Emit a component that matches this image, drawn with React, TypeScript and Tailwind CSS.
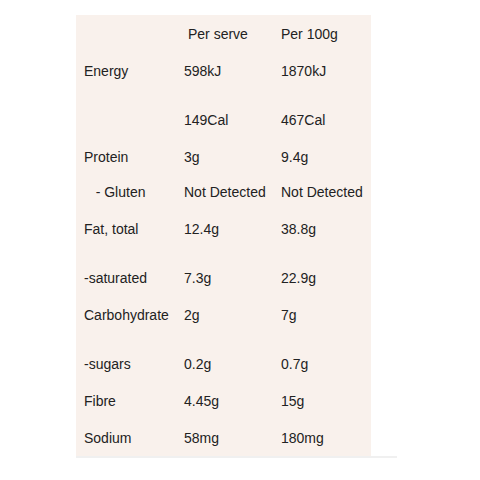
import React from "react";

type Row = { label: string; serve: string; per100: string; gap: string };

const rows: Row[] = [
  { label: "Energy", serve: "598kJ", per100: "1870kJ", gap: "pt-[21px]" },
  { label: "", serve: "149Cal", per100: "467Cal", gap: "pt-[33px]" },
  { label: "Protein", serve: "3g", per100: "9.4g", gap: "pt-[21px]" },
  { label: "\u00a0\u00a0\u00a0- Gluten", serve: "Not Detected", per100: "Not Detected", gap: "pt-[19px]" },
  { label: "Fat, total", serve: "12.4g", per100: "38.8g", gap: "pt-[21px]" },
  { label: "-saturated", serve: "7.3g", per100: "22.9g", gap: "pt-[33px]" },
  { label: "Carbohydrate", serve: "2g", per100: "7g", gap: "pt-[21px]" },
  { label: "-sugars", serve: "0.2g", per100: "0.7g", gap: "pt-[33px]" },
  { label: "Fibre", serve: "4.45g", per100: "15g", gap: "pt-[21px]" },
  { label: "Sodium", serve: "58mg", per100: "180mg", gap: "pt-[21px]" },
];

const App: React.FC = () => {
  return (
    <div className="min-h-[480px] bg-white pt-[15px] pl-[76px]">
      {/* Nutrition table */}
      <div
        className="w-[321px] border-b-2 border-[#f0f0f0] text-[14px] leading-4 text-[#222]"
        style={{ fontFamily: '"Liberation Sans", Arial, sans-serif' }}
      >
        <div className="w-[295px] bg-[#f9f1ec] pt-[11px] pb-[10px]">
          <div className="grid grid-cols-[108px_97px_1fr]">
            <div></div>
            <div className="pl-1">Per serve</div>
            <div>Per 100g</div>
          </div>
          {rows.map((r, i) => (
            <div key={i} className={`grid grid-cols-[108px_97px_1fr] ${r.gap}`}>
              <div className="pl-2 whitespace-pre">{r.label}</div>
              <div className="whitespace-nowrap">{r.serve}</div>
              <div className="whitespace-nowrap">{r.per100}</div>
            </div>
          ))}
        </div>
      </div>
    </div>
  );
};

export default App;
